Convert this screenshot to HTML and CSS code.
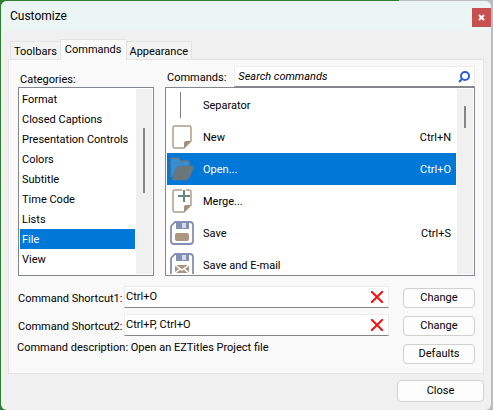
FILE: index.html
```
<!DOCTYPE html>
<html lang="en">
<head>
    <title>Customize</title>
    <meta charset="UTF-8">
    <meta name="viewport" content="width=device-width, initial-scale=1.0">
    <link rel="stylesheet" href="styles.css">
</head>
<body>
    <main class="dialog">
        <header class="titlebar">
            <h1>Customize</h1>
            <button class="close-x" type="button" aria-label="Close window">
                <svg width="7" height="7" viewBox="0 0 7 7"><path d="M1 1l5 5M6 1l-5 5" stroke="#fff" stroke-width="2"/></svg>
            </button>
        </header>

        <div class="content">
            <div class="tabs" role="tablist">
                <button class="tab" type="button" role="tab">Toolbars</button>
                <button class="tab active" type="button" role="tab" aria-selected="true">Commands</button>
                <button class="tab" type="button" role="tab">Appearance</button>
            </div>

            <section class="panel">
                <div class="lists">
                    <div class="list-head">
                        <span class="categories-label" id="categories-label">Categories:</span>
                    </div>
                    <div class="list-head">
                        <label for="search">Commands:</label>
                        <div class="search">
                            <input type="text" id="search" placeholder="Search commands">
                            <svg width="12" height="12" viewBox="0 0 12 12" fill="none" stroke="#2a5bdc" stroke-width="2"><circle cx="7" cy="5" r="4"/><path d="M4 8L1 11"/></svg>
                        </div>
                    </div>

                    <div class="listbox">
                        <ul class="categories" role="listbox" aria-labelledby="categories-label">
                            <li>Format</li>
                            <li>Closed Captions</li>
                            <li>Presentation Controls</li>
                            <li>Colors</li>
                            <li>Subtitle</li>
                            <li>Time Code</li>
                            <li>Lists</li>
                            <li class="selected">File</li>
                            <li>View</li>
                        </ul>
                        <div class="scrollbar"><div class="thumb thumb-categories"></div></div>
                    </div>

                    <div class="listbox">
                        <ul class="commands" role="listbox" aria-label="Commands">
                            <li>
                                <svg width="24" height="26" viewBox="0 0 24 26"><path d="M10.500 0v26" stroke="#808080"/></svg>
                                <span>Separator</span>
                            </li>
                            <li>
                                <svg width="24" height="24" viewBox="0 0 24 24">
                                    <path d="M5 1h14q2 0 2 2v13l-7 7H5q-2 0-2-2V3q0-2 2-2z" fill="#fff" stroke="#b39b87" stroke-width="1.500"/>
                                    <path d="M14 23v-5q0-2 2-2h5z" fill="#a58e79"/>
                                </svg>
                                <span>New</span>
                                <kbd>Ctrl+N</kbd>
                            </li>
                            <li class="selected">
                                <svg width="24" height="24" viewBox="0 0 24 24">
                                    <path d="M1 20V2q0-1 1-1h6l3 3h6q2 0 2 2v3" fill="#2f92e0" stroke="#667780" stroke-width="1.500"/>
                                    <path d="M4 6h9" stroke="#667780"/>
                                    <path d="M3 23q-1-1 0-3L6 11q1-2 3-2h14q1 0 1 1l-5 11q-1 2-3 2z" fill="#6b767b" stroke="#55768e"/>
                                </svg>
                                <span>Open...</span>
                                <kbd>Ctrl+O</kbd>
                            </li>
                            <li>
                                <svg width="24" height="24" viewBox="0 0 24 24">
                                    <path d="M5 1h14q2 0 2 2v13l-7 7H5q-2 0-2-2V3q0-2 2-2z" fill="#fff" stroke="#b39b87" stroke-width="1.500"/>
                                    <path d="M14 23v-5q0-2 2-2h5z" fill="#a58e79"/>
                                    <path d="M14 0v14M7 7h11" stroke="#fff" stroke-width="4"/>
                                    <path d="M14 1v12M8 7h12" stroke="#66887a" stroke-width="2"/>
                                </svg>
                                <span>Merge...</span>
                            </li>
                            <li>
                                <svg width="24" height="24" viewBox="0 0 24 24">
                                    <path d="M5 1h15q3 0 3 3v16q0 3-3 3H4q-3 0-3-3V5z" fill="#fff" stroke="#8290b4" stroke-width="1.800"/>
                                    <path d="M6 1h13v7H6z" fill="#8290b4"/>
                                    <path d="M12 2h4v5h-4z" fill="#d4d9e7"/>
                                    <rect x="5" y="12" width="14" height="8" rx="2" fill="#ad967f"/>
                                </svg>
                                <span>Save</span>
                                <kbd>Ctrl+S</kbd>
                            </li>
                            <li>
                                <svg width="24" height="24" viewBox="0 0 24 24">
                                    <path d="M5 1h15q3 0 3 3v16q0 3-3 3H4q-3 0-3-3V5z" fill="#fff" stroke="#8290b4" stroke-width="1.800"/>
                                    <path d="M6 1h13v7H6z" fill="#8290b4"/>
                                    <path d="M12 2h4v5h-4z" fill="#d4d9e7"/>
                                    <path d="M5 12h14v8H5z" fill="#ad967f"/>
                                    <path d="M5 12l7 5 7-5M5 20l5-4M19 20l-5-4" fill="none" stroke="#fff" stroke-width="1.500"/>
                                </svg>
                                <span>Save and E-mail</span>
                            </li>
                        </ul>
                        <div class="scrollbar"><div class="thumb thumb-commands"></div></div>
                    </div>
                </div>

                <form class="shortcuts">
                    <label for="shortcut1">Command Shortcut1:</label>
                    <div class="field">
                        <input type="text" id="shortcut1" value="Ctrl+O">
                        <button class="clear" type="button" aria-label="Clear shortcut 1">
                            <svg width="12" height="12" viewBox="0 0 12 12"><path d="M0 0l12 12M12 0L0 12" stroke="#f31212" stroke-width="2"/></svg>
                        </button>
                    </div>
                    <button class="btn" type="button">Change</button>

                    <label for="shortcut2">Command Shortcut2:</label>
                    <div class="field">
                        <input type="text" id="shortcut2" value="Ctrl+P, Ctrl+O">
                        <button class="clear" type="button" aria-label="Clear shortcut 2">
                            <svg width="12" height="12" viewBox="0 0 12 12"><path d="M0 0l12 12M12 0L0 12" stroke="#f31212" stroke-width="2"/></svg>
                        </button>
                    </div>
                    <button class="btn" type="button">Change</button>

                    <p class="description">Command description: Open an EZTitles Project file</p>
                    <button class="btn" type="button">Defaults</button>
                </form>
            </section>

            <footer class="footer">
                <button class="btn btn-close" type="button">Close</button>
            </footer>
        </div>
    </main>
</body>
</html>
```
FILE: styles.css
```
* {
    box-sizing: border-box;
}

body {
    margin: 0;
    padding: 1px 2px 1px 1px;
    min-height: 100vh;
    display: flex;
    background: linear-gradient(to right, #2d7d32 81%, #bdbdbd 81%);
    font-family: Roboto, "Liberation Sans", sans-serif;
    font-size: 11px;
    line-height: 16px;
    color: #000;
}

button, input {
    font: inherit;
    color: inherit;
}

svg {
    display: block;
    flex: none;
}

.dialog {
    flex: 1;
    background-color: #f0f0f0;
    border-radius: 6px;
    overflow: hidden;
}

.titlebar {
    display: flex;
    align-items: center;
    justify-content: space-between;
    height: 30px;
    padding: 0 0 0 9px;
    background-color: #ebf5f4;
}

h1 {
    margin: 0;
    font-size: 12px;
    font-weight: normal;
}

.close-x {
    display: flex;
    align-items: center;
    justify-content: center;
    width: 19px;
    height: 19px;
    margin-top: 3px;
    padding: 0;
    border: none;
    background-color: #c75050;
}

.content {
    padding: 8px 7px;
}

.tabs {
    display: flex;
    align-items: flex-end;
    padding-left: 2px;
}

.tab {
    height: 18px;
    padding: 2px 3px 0;
    border: 1px solid #e3e3e3;
    border-bottom: none;
    background-color: #f3f3f3;
}

.tab.active {
    height: 21px;
    margin: 0 -1px -1px;
    padding: 0 4px 1px;
    background-color: #f9f9f9;
    z-index: 1;
}

.panel {
    padding: 6px 8px 9px 9px;
    border: 1px solid #e3e3e3;
    background-color: #f9f9f9;
}

.lists {
    display: grid;
    grid-template-columns: 136px 1fr;
    column-gap: 11px;
}

.list-head {
    display: flex;
    align-items: center;
    height: 21px;
    padding-left: 2px;
}

.list-head label {
    padding-top: 2px;
}

.categories-label {
    padding-top: 6px;
}

.search {
    display: flex;
    align-items: center;
    flex: 1;
    height: 21px;
    margin-left: 8px;
    padding: 0 4px 0 3px;
    border: 1px solid #ececec;
    border-bottom-color: #868686;
    background-color: #fff;
}

.search input {
    font-style: italic;
}

.search input::placeholder {
    color: #000;
    opacity: 1;
}

.search input, .field input {
    flex: 1;
    min-width: 0;
    padding: 0;
    border: none;
    outline: none;
    background: none;
}

.listbox {
    display: flex;
    height: 189px;
    padding: 1px;
    border: 1px solid #828790;
    background-color: #fff;
    overflow: hidden;
}

.listbox ul {
    flex: 1;
    margin: 0 1px 0 0;
    padding: 0;
    list-style: none;
    overflow: hidden;
}

.categories li {
    height: 20px;
    padding-left: 2px;
    line-height: 22px;
    white-space: nowrap;
}

.commands li {
    display: flex;
    align-items: center;
    height: 32px;
    padding: 0 5px 0 3px;
}

.commands span {
    flex: 1;
    margin-left: 9px;
}

.commands span, kbd {
    padding-top: 2px;
}

kbd {
    font: inherit;
}

.listbox .selected {
    background-color: #0078d7;
    color: #fff;
}

.scrollbar {
    width: 16px;
    background-color: #f0f0f0;
}

.thumb {
    width: 2px;
    margin-left: 7px;
    background-color: #858585;
}

.thumb-categories {
    height: 65px;
    margin-top: 39px;
}

.thumb-commands {
    height: 22px;
    margin-top: 17px;
}

.shortcuts {
    display: grid;
    grid-template-columns: 106px 1fr 72px;
    grid-auto-rows: 22px;
    align-items: end;
    row-gap: 6px;
    margin-top: 10px;
}

.shortcuts label {
    padding-bottom: 1px;
    white-space: nowrap;
}

.field {
    display: flex;
    align-items: center;
    height: 22px;
    margin-right: 14px;
    padding: 0 5px 0 1px;
    border: 1px solid #ececec;
    border-bottom-color: #868686;
    background-color: #fff;
}

.clear {
    padding: 0;
    border: none;
    background: none;
}

.description {
    grid-column: span 2;
    align-self: start;
    margin: 0 0 0 -1px;
    line-height: 12px;
}

.btn {
    height: 20px;
    padding: 0;
    border: 1px solid #d0d0d0;
    border-radius: 4px;
    background-color: #fdfdfd;
}

.footer {
    display: flex;
    justify-content: flex-end;
    margin-top: 6px;
}

.btn-close {
    width: 87px;
    height: 22px;
}
```
